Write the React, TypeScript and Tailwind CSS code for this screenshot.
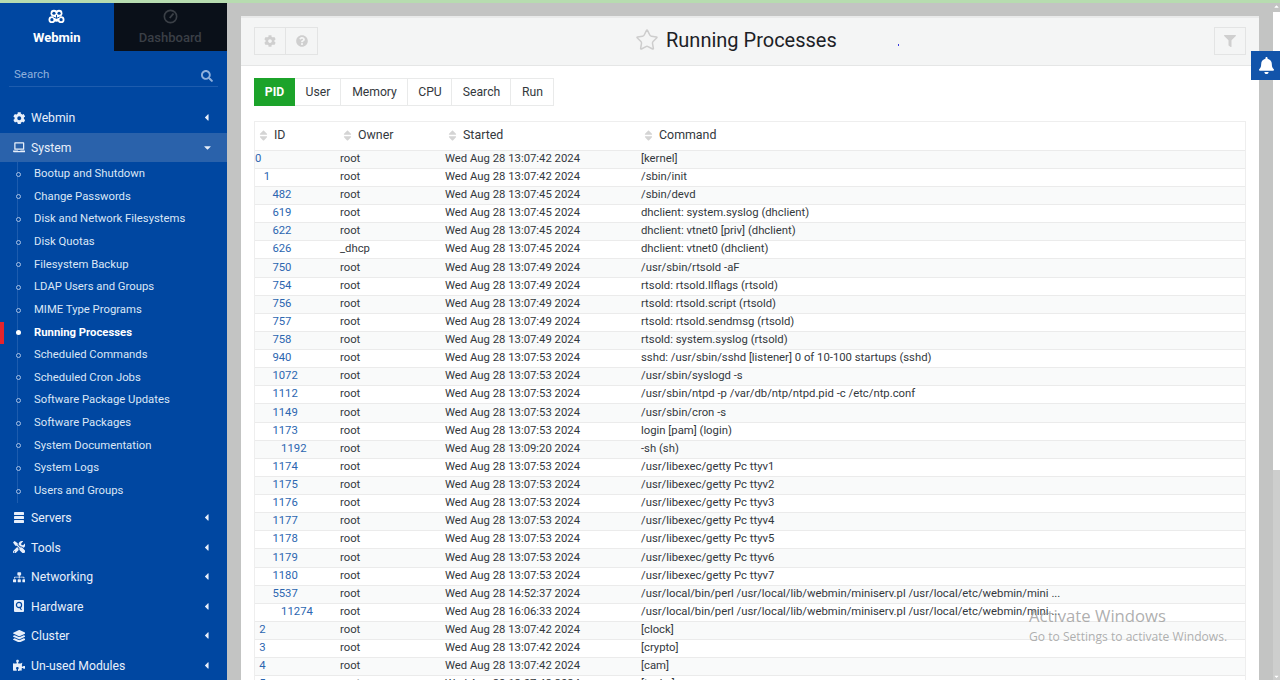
import React from "react";
import { FaCog, FaLaptop, FaTools, FaSitemap, FaLayerGroup, FaPuzzlePiece, FaSearch, FaCaretLeft, FaCaretDown, FaCaretUp, FaQuestionCircle, FaFilter, FaBell, FaSort } from "react-icons/fa";
import { Star } from "lucide-react";

const subs = ["Bootup and Shutdown","Change Passwords","Disk and Network Filesystems","Disk Quotas","Filesystem Backup","LDAP Users and Groups","MIME Type Programs","Running Processes","Scheduled Commands","Scheduled Cron Jobs","Software Package Updates","Software Packages","System Documentation","System Logs","Users and Groups"];

const rows: [string, number, string, string, string][] = [
["0",0,"root","13:07:42","[kernel]"],
["1",1,"root","13:07:42","/sbin/init"],
["482",2,"root","13:07:45","/sbin/devd"],
["619",2,"root","13:07:45","dhclient: system.syslog (dhclient)"],
["622",2,"root","13:07:45","dhclient: vtnet0 [priv] (dhclient)"],
["626",2,"_dhcp","13:07:45","dhclient: vtnet0 (dhclient)"],
["750",2,"root","13:07:49","/usr/sbin/rtsold -aF"],
["754",2,"root","13:07:49","rtsold: rtsold.llflags (rtsold)"],
["756",2,"root","13:07:49","rtsold: rtsold.script (rtsold)"],
["757",2,"root","13:07:49","rtsold: rtsold.sendmsg (rtsold)"],
["758",2,"root","13:07:49","rtsold: system.syslog (rtsold)"],
["940",2,"root","13:07:53","sshd: /usr/sbin/sshd [listener] 0 of 10-100 startups (sshd)"],
["1072",2,"root","13:07:53","/usr/sbin/syslogd -s"],
["1112",2,"root","13:07:53","/usr/sbin/ntpd -p /var/db/ntp/ntpd.pid -c /etc/ntp.conf"],
["1149",2,"root","13:07:53","/usr/sbin/cron -s"],
["1173",2,"root","13:07:53","login [pam] (login)"],
["1192",3,"root","13:09:20","-sh (sh)"],
["1174",2,"root","13:07:53","/usr/libexec/getty Pc ttyv1"],
["1175",2,"root","13:07:53","/usr/libexec/getty Pc ttyv2"],
["1176",2,"root","13:07:53","/usr/libexec/getty Pc ttyv3"],
["1177",2,"root","13:07:53","/usr/libexec/getty Pc ttyv4"],
["1178",2,"root","13:07:53","/usr/libexec/getty Pc ttyv5"],
["1179",2,"root","13:07:53","/usr/libexec/getty Pc ttyv6"],
["1180",2,"root","13:07:53","/usr/libexec/getty Pc ttyv7"],
["5537",2,"root","14:52:37","/usr/local/bin/perl /usr/local/lib/webmin/miniserv.pl /usr/local/etc/webmin/mini ..."],
["11274",3,"root","16:06:33","/usr/local/bin/perl /usr/local/lib/webmin/miniserv.pl /usr/local/etc/webmin/mini ..."],
["2",0.5,"root","13:07:42","[clock]"],
["3",0.5,"root","13:07:42","[crypto]"],
["4",0.5,"root","13:07:42","[cam]"],
["5",0.5,"root","13:07:42","[taskq]"],
];

function TopItem({ icon, label, open }: { icon: React.ReactNode; label: string; open?: boolean }) {
  return (
    <div className={`flex items-center h-[29.6px] pl-[10px] pr-[15px] text-[12.2px] text-[#e8effa] ${open ? "bg-[#2a62ab]" : ""}`}>
      <span className="w-[18px] flex justify-center text-[12.5px] mr-[3px]">{icon}</span>
      <span className="flex-1 pt-[1px]">{label}</span>
      {open ? <FaCaretDown className="text-[11px] -mr-[1px]" /> : <FaCaretLeft className="text-[11px]" />}
    </div>
  );
}

function SortHead({ label, w }: { label: string; w: string }) {
  return (
    <div className={`flex items-center ${w} gap-[4px]`}>
      <FaSort className="text-[13px] text-[#d4d4d4]" />
      <span>{label}</span>
    </div>
  );
}

function WebminLogo() {
  return (
    <svg viewBox="0 0 20 20" className="w-[17px] h-[17px]">
      <g fill="#ffffff">
        <circle cx="7" cy="5" r="4" />
        <circle cx="13" cy="5" r="4" />
        <circle cx="4.6" cy="12.5" r="4" />
        <circle cx="15.4" cy="12.5" r="4" />
        <circle cx="10" cy="11" r="4" />
      </g>
      <g fill="#0047a1">
        <circle cx="7" cy="5" r="1.9" />
        <circle cx="13" cy="5" r="1.9" />
        <circle cx="4.6" cy="12.5" r="1.9" />
        <circle cx="15.4" cy="12.5" r="1.9" />
      </g>
      <path d="M10 7v4M6.5 9.5l3.5 1.5 3.5-1.5" fill="none" stroke="#0047a1" strokeWidth="1.1" />
    </svg>
  );
}

function Gauge() {
  return (
    <svg viewBox="0 0 20 20" className="w-[15px] h-[15px]" fill="none" stroke="currentColor" strokeWidth="2.2">
      <circle cx="10" cy="10" r="8.2" />
      <path d="M9 12l5-6" strokeWidth="2.6" />
    </svg>
  );
}

function ServerStack() {
  return (
    <svg viewBox="0 0 10 11" className="w-[10px] h-[11px]" fill="currentColor">
      <rect x="0" y="0" width="10" height="3" rx="0.4" />
      <rect x="0" y="4" width="10" height="3" rx="0.4" />
      <rect x="0" y="8" width="10" height="3" rx="0.4" />
    </svg>
  );
}

function Drive() {
  return (
    <svg viewBox="0 0 10 12" className="w-[10px] h-[12px]">
      <rect x="0" y="0" width="10" height="12" rx="1" fill="currentColor" />
      <circle cx="5" cy="5" r="2.6" fill="none" stroke="#0047a1" strokeWidth="1.2" />
      <path d="M5.5 7l2 3" stroke="#0047a1" strokeWidth="1.1" />
    </svg>
  );
}

export default function App() {
  return (
    <div className="w-[1280px] h-[680px] overflow-hidden bg-[#c3c4c3] font-['Roboto',sans-serif] relative">
      <div className="h-[3px] bg-[#b7dcb0]" />
      <div className="flex h-[677px]">
        <aside className="w-[227px] shrink-0 bg-[#0047a1] overflow-hidden">
          <div className="flex h-[48px]">
            <div className="w-[113.5px] flex flex-col items-center pt-[6px] text-white font-bold text-[13px]">
              <WebminLogo />
              <span className="mt-[2px]">Webmin</span>
            </div>
            <div className="w-[113.5px] bg-[#0a1019] flex flex-col items-center pt-[6px] text-[#3a3f46] text-[13px] font-medium">
              <Gauge />
              <span className="mt-[4px]">Dashboard</span>
            </div>
          </div>
          <div className="mx-[9px] h-[36px] border-b border-[#1d5cae] flex items-end justify-between pb-[3px] pl-[5px] pr-[5px] text-[11.5px] text-[#8fb0dc]">
            <span>Search</span>
            <FaSearch className="text-[12px] mb-[1px]" />
          </div>
          <div className="h-[16px]" />
          <TopItem icon={<FaCog />} label="Webmin" />
          <TopItem icon={<FaLaptop />} label="System" open />
          <div className="relative pt-[1px]">
            <div className="absolute left-[17px] top-0 bottom-0 w-px bg-[#1d5cae]" />
            {subs.map((s) => {
              const active = s === "Running Processes";
              return (
                <div key={s} className={`relative flex items-center h-[22.65px] pl-[34px] text-[11.3px] ${active ? "text-white font-bold" : "text-[#dbe6f6]"}`}>
                  {active && <span className="absolute left-0 top-0 bottom-0 w-[4px] bg-[#e5242c]" />}
                  <span className={`absolute left-[16px] top-[8.5px] w-[5px] h-[5px] rounded-full ${active ? "bg-white" : "border border-[#a9c2e6] bg-[#0047a1]"}`} />
                  {s}
                </div>
              );
            })}
          </div>
          <TopItem icon={<ServerStack />} label="Servers" />
          <TopItem icon={<FaTools />} label="Tools" />
          <TopItem icon={<FaSitemap />} label="Networking" />
          <TopItem icon={<Drive />} label="Hardware" />
          <TopItem icon={<FaLayerGroup />} label="Cluster" />
          <TopItem icon={<FaPuzzlePiece />} label="Un-used Modules" />
        </aside>

        <main className="flex-1 pt-[13px] px-[14px] overflow-hidden">
          <div className="bg-white border-t-[2px] border-[#e9eaea] h-[700px]">
            <div className="h-[48px] bg-[#f4f5f5] border-b border-[#e5e6e6] flex items-center justify-between px-[13px] relative">
              <div className="flex h-[28px] mt-[-2px] text-[#cfcfcf] text-[12px]">
                <div className="w-[32px] border border-[#e3e4e4] flex items-center justify-center"><FaCog /></div>
                <div className="w-[32px] border border-l-0 border-[#e3e4e4] flex items-center justify-center"><FaQuestionCircle /></div>
              </div>
              <div className="flex items-center gap-[7px] absolute left-[394px] top-[8px]">
                <Star size={24} strokeWidth={1.5} className="text-[#cdcdcd]" />
                <span className="text-[20px] text-[#1c2126] leading-[28px]">Running Processes</span>
              </div>
              <span className="absolute left-[657px] top-[26px] w-[1px] h-[2px] bg-[#3a3ae0]" />
              <div className="w-[32px] h-[28px] mt-[-2px] border border-[#e3e4e4] flex items-center justify-center text-[#cfcfcf] text-[12px]"><FaFilter /></div>
            </div>
            <div className="px-[13px]">
              <div className="flex h-[28px] mt-[12px] text-[12.2px] text-[#33383d]">
                <div className="w-[41px] bg-[#1ca32a] text-white font-bold flex items-center justify-center">PID</div>
                {[["User","w-[46px]"],["Memory","w-[67px]"],["CPU","w-[44px]"],["Search","w-[59px]"],["Run","w-[43px]"]].map(([t,w]) => (
                  <div key={t} className={`${w} pl-[1px] border border-l-0 border-[#e9eaea] flex items-center justify-center`}>{t}</div>
                ))}
              </div>
              <div className="mt-[15px] border-x border-t border-[#eeeeee]">
                <div className="flex h-[27.7px] pb-[1px] items-center text-[12.4px] text-[#33383d]">
                  <SortHead label="ID" w="w-[85px] pl-[2px]" />
                  <SortHead label="Owner" w="w-[105px] pl-[1px]" />
                  <SortHead label="Started" w="w-[196px] pl-[1px]" />
                  <SortHead label="Command" w="w-[300px] pl-[1px]" />
                </div>
                {rows.map(([pid, depth, owner, time, cmd], i) => (
                  <div key={pid} className={`flex items-center h-[18.14px] border-t border-[#ebebeb] text-[11.3px] text-[#33383d] whitespace-nowrap ${i % 2 === 0 ? "bg-[#f9fafa]" : "bg-white"}`}>
                    <div className="w-[85px] text-[#2c66b0]" style={{ paddingLeft: depth * 8.7 }}>{pid}</div>
                    <div className="w-[105px]">{owner}</div>
                    <div className="w-[196px]">Wed Aug 28 {time} 2024</div>
                    <div className="flex-1">{cmd}</div>
                  </div>
                ))}
              </div>
            </div>
          </div>
        </main>

        <div className="w-[7px] flex flex-col">
          <div className="h-[9px] flex justify-center text-white text-[7px]"><FaCaretUp /></div>
          <div className="h-[458px] bg-white" />
          <div className="flex-1 bg-[#cdcecd] flex items-end justify-center text-white text-[7px]"><FaCaretDown /></div>
        </div>
      </div>

      <div className="absolute left-[1251px] top-[51px] w-[29px] h-[29px] bg-[#1254aa] flex items-center justify-center pl-[2px] text-white text-[17px]"><FaBell /></div>
      <div className="absolute left-[1029px] top-[605px] text-[#9a9a9a]/80 pointer-events-none">
        <div className="text-[16.7px] leading-[22px] font-['Open_Sans',sans-serif]">Activate Windows</div>
        <div className="text-[12.1px] leading-[16px] mt-[2px] font-['Open_Sans',sans-serif]">Go to Settings to activate Windows.</div>
      </div>
    </div>
  );
}
